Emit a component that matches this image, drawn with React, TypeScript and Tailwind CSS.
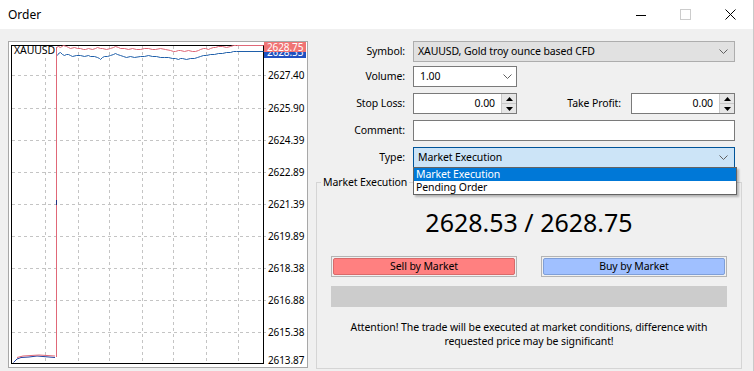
import React from 'react';

const red = [
  [56, 47], [58, 46], [60, 47], [63, 45], [66, 46], [68, 47], [70, 48], [74, 47], [77, 48], [80, 48], [83, 49],
  [85, 49], [88, 48], [92, 49], [95, 48], [97, 47], [100, 48], [102, 48], [106, 49], [110, 48], [113, 47],
  [115, 46], [118, 47], [120, 48], [124, 48], [128, 49], [132, 48], [136, 49], [140, 49], [144, 48], [148, 48],
  [152, 49], [155, 49], [160, 48], [165, 49], [170, 50], [173, 51], [175, 51], [178, 50], [180, 50], [184, 51],
  [188, 50], [192, 51], [195, 51], [198, 50], [200, 49], [203, 48], [205, 48], [208, 49], [210, 48], [213, 47],
  [215, 47], [218, 46], [222, 46], [226, 47], [230, 46], [233, 45], [236, 45], [263, 45],
];
const blue = [
  [57, 55], [58, 53], [60, 52], [62, 54], [64, 55], [66, 54], [68, 54], [70, 55], [72, 56], [76, 55], [80, 55],
  [84, 56], [88, 55], [90, 56], [94, 56], [97, 57], [99, 58], [100, 59], [102, 57], [104, 56], [107, 56],
  [110, 55], [113, 54], [115, 53], [117, 54], [120, 55], [123, 56], [126, 57], [130, 56], [134, 57], [140, 56],
  [144, 56], [148, 55], [152, 56], [156, 56], [160, 57], [164, 57], [168, 57], [172, 58], [175, 58], [178, 59],
  [180, 58], [182, 58], [186, 59], [190, 58], [194, 58], [197, 57], [200, 56], [203, 55], [206, 55], [210, 54],
  [214, 54], [218, 53], [222, 53], [226, 52], [230, 52], [233, 51], [236, 51], [263, 51],
];

// screen coords -> svg coords (svg starts at 9,42)
const toPath = (pts: number[][]) =>
  pts.map((p, i) => `${i === 0 ? 'M' : 'L'}${p[0] - 9 + 0.5} ${p[1] - 42 + 0.5}`).join(' ');

const hLines = [33, 66, 98, 130, 162, 194, 226, 258, 290];
const vLines = [36, 69, 100, 133, 164, 197, 229];
const labels = ['2627.40', '2625.90', '2624.39', '2622.89', '2621.39', '2619.89', '2618.38', '2616.88', '2615.38'];

function Chart() {
  return (
    <div className="w-[300px] h-[327px] border border-[#a8a8a8] bg-white">
      <svg width="298" height="325" className="block">
        <defs>
          <clipPath id="bluetag">
            <rect x="255" y="10" width="42" height="6" />
          </clipPath>
        </defs>
        {hLines.map((y) => (
          <line key={y} x1="3" x2="257" y1={y + 0.5} y2={y + 0.5} stroke="#c4c4c4" strokeDasharray="3 3" />
        ))}
        {vLines.map((x) => (
          <line key={x} x1={x + 0.5} x2={x + 0.5} y1="4" y2="321" stroke="#c4c4c4" strokeDasharray="3 3" />
        ))}
        <rect x="2.5" y="3.5" width="252" height="318" fill="none" stroke="#000" />
        {labels.map((t, i) => (
          <text key={t} x="259" y={hLines[i] + 4} fontSize="10" fontFamily="'Noto Sans', sans-serif" fill="#000">
            {t}
          </text>
        ))}
        <text x="259" y="322" fontSize="10" fontFamily="'Noto Sans', sans-serif" fill="#000">2613.87</text>

        <path d={toPath(blue)} fill="none" stroke="#1f5faa" strokeWidth="1" />
        <path d={toPath(red)} fill="none" stroke="#e06878" strokeWidth="1" />
        <line x1="47.5" x2="47.5" y1="5" y2="315" stroke="#e06878" />
        <line x1="47.5" x2="47.5" y1="158" y2="163" stroke="#203080" />
        <path d="M4.5 320.5 L8 317 L12 315.5 L20 315 L28 314 L34 314.5 L40 315 L46 315.5" fill="none" stroke="#2040a0" />
        <path d="M8 315.5 L14 314 L22 313.5 L30 313 L38 313.5 L46 314" fill="none" stroke="#e06878" />

        <rect x="3" y="4" width="42" height="11" fill="#fff" />
        <text x="5" y="12" fontSize="10.5" fontFamily="'Noto Sans', sans-serif" fill="#000">XAUUSD</text>

        <rect x="255" y="10" width="42" height="6" fill="#2050c0" />
        <g clipPath="url(#bluetag)">
          <text x="258" y="14" fontSize="10" fontFamily="'Noto Sans', sans-serif" fill="#fff">2628.53</text>
        </g>
        <rect x="255" y="0" width="42" height="10" fill="#f07474" />
        <text x="258" y="9" fontSize="10" fontFamily="'Noto Sans', sans-serif" fill="#fff">2628.75</text>
      </svg>
    </div>
  );
}

function Chevron() {
  return (
    <svg width="9" height="5" className="shrink-0">
      <polyline points="0.5,0.5 4.5,4.5 8.5,0.5" fill="none" stroke="#606060" />
    </svg>
  );
}

function Spinner() {
  return (
    <div className="w-[15px] h-full flex flex-col bg-[#e6e6e6] border-l border-[#c8c8c8]">
      <div className="flex-1 flex items-center justify-center border-b border-[#c8c8c8]">
        <svg width="7" height="4"><polygon points="0,4 3.5,0 7,4" fill="#000" /></svg>
      </div>
      <div className="flex-1 flex items-center justify-center">
        <svg width="7" height="4"><polygon points="0,0 3.5,4 7,0" fill="#000" /></svg>
      </div>
    </div>
  );
}

function Label({ children }: { children: React.ReactNode }) {
  return <div className="w-[89px] shrink-0 text-right text-[#000]">{children}</div>;
}

export default function App() {
  return (
    <div className="w-[754px] h-[371px] bg-[#f0f0f0] overflow-hidden font-['Noto_Sans',sans-serif] text-[10.5px] tracking-[-0.1px] text-black border-r border-[#c9c9c9]">
      {/* title bar */}
      <div className="h-[29px] bg-white flex items-center justify-between">
        <div className="pl-[8px] text-[12px] tracking-normal leading-none">Order</div>
        <div className="flex h-full">
          <div className="w-[45px] flex items-center justify-center">
            <svg width="10" height="10"><line x1="0" x2="10" y1="5.5" y2="5.5" stroke="#000" /></svg>
          </div>
          <div className="w-[45px] flex items-center justify-center">
            <svg width="11" height="11"><rect x="0.5" y="0.5" width="10" height="10" fill="none" stroke="#cccccc" /></svg>
          </div>
          <div className="w-[45px] flex items-center justify-center">
            <svg width="11" height="11">
              <line x1="0.5" y1="0.5" x2="10.5" y2="10.5" stroke="#000" />
              <line x1="10.5" y1="0.5" x2="0.5" y2="10.5" stroke="#000" />
            </svg>
          </div>
        </div>
      </div>

      <div className="flex pt-[12px] pl-[8px] gap-[8px]">
        <Chart />

        <div className="w-[426px] flex flex-col relative">
          {/* Symbol */}
          <div className="flex items-center gap-[8px] h-[21px]">
            <Label>Symbol:</Label>
            <div className="w-[322px] h-full bg-[#e1e1e1] border border-[#adadad] flex items-center justify-between pl-[4px] pr-[6px]">
              <span>XAUUSD, Gold troy ounce based CFD</span>
              <Chevron />
            </div>
          </div>
          {/* Volume */}
          <div className="flex items-center gap-[8px] h-[21px] mt-[4px]">
            <Label>Volume:</Label>
            <div className="w-[104px] h-full bg-white border border-[#7a7a7a] flex items-center justify-between pl-[6px] pr-[4px]">
              <span>1.00</span>
              <Chevron />
            </div>
          </div>
          {/* SL / TP */}
          <div className="flex items-center h-[21px] mt-[6px]">
            <Label>Stop Loss:</Label>
            <div className="ml-[8px] w-[104px] h-full bg-white border border-[#7a7a7a] flex items-center">
              <span className="flex-1 text-right pr-[6px]">0.00</span>
              <Spinner />
            </div>
            <div className="flex-1 text-right pr-[10px]">Take Profit:</div>
            <div className="w-[104px] mr-[7px] h-full bg-white border border-[#7a7a7a] flex items-center">
              <span className="flex-1 text-right pr-[6px]">0.00</span>
              <Spinner />
            </div>
          </div>
          {/* Comment */}
          <div className="flex items-center gap-[8px] h-[21px] mt-[6px]">
            <Label>Comment:</Label>
            <div className="w-[322px] h-full bg-white border border-[#7a7a7a]" />
          </div>
          {/* Type */}
          <div className="flex items-center gap-[8px] h-[21px] mt-[6px]">
            <Label>Type:</Label>
            <div className="w-[322px] h-full bg-[#cce4f7] border border-[#005499] flex items-center justify-between pl-[4px] pr-[6px]">
              <span>Market Execution</span>
              <Chevron />
            </div>
          </div>

          {/* open dropdown list */}
          <div className="absolute left-[97px] top-[126px] w-[324px] bg-white border border-[#646464] shadow-[2px_2px_2px_rgba(0,0,0,0.25)] z-10 leading-[13px]">
            <div className="bg-[#0078d7] text-white pl-[2px]">Market Execution</div>
            <div className="pl-[2px]">Pending Order</div>
          </div>

          <fieldset className="mt-[7px] h-[194px] mr-0 border border-[#d5d5d5] flex flex-col items-center">
            <legend className="ml-[4px] px-[2px] leading-[15px]">Market Execution</legend>
            <div className="mt-[15px] text-[25px] tracking-normal leading-[34px]">2628.53 / 2628.75</div>
            <div className="mt-[17px] w-[396px] flex justify-between">
              <div className="w-[186px] h-[21px] border border-[#b4b4b4] p-px">
                <div className="h-full bg-[#ff8080] border border-[#d86a6a] rounded-[2px] flex items-center justify-center">
                  Sell by Market
                </div>
              </div>
              <div className="w-[186px] h-[21px] border border-[#b4b4b4] p-px">
                <div className="h-full bg-[#a0c0ff] border border-[#7f9fd8] rounded-[2px] flex items-center justify-center">
                  Buy by Market
                </div>
              </div>
            </div>
            <div className="mt-[9px] w-[396px] h-[21px] bg-[#cccccc]" />
            <div className="mt-[13px] text-center leading-[14px]">
              Attention! The trade will be executed at market conditions, difference with
              <br />
              requested price may be significant!
            </div>
          </fieldset>
        </div>
      </div>
    </div>
  );
}
